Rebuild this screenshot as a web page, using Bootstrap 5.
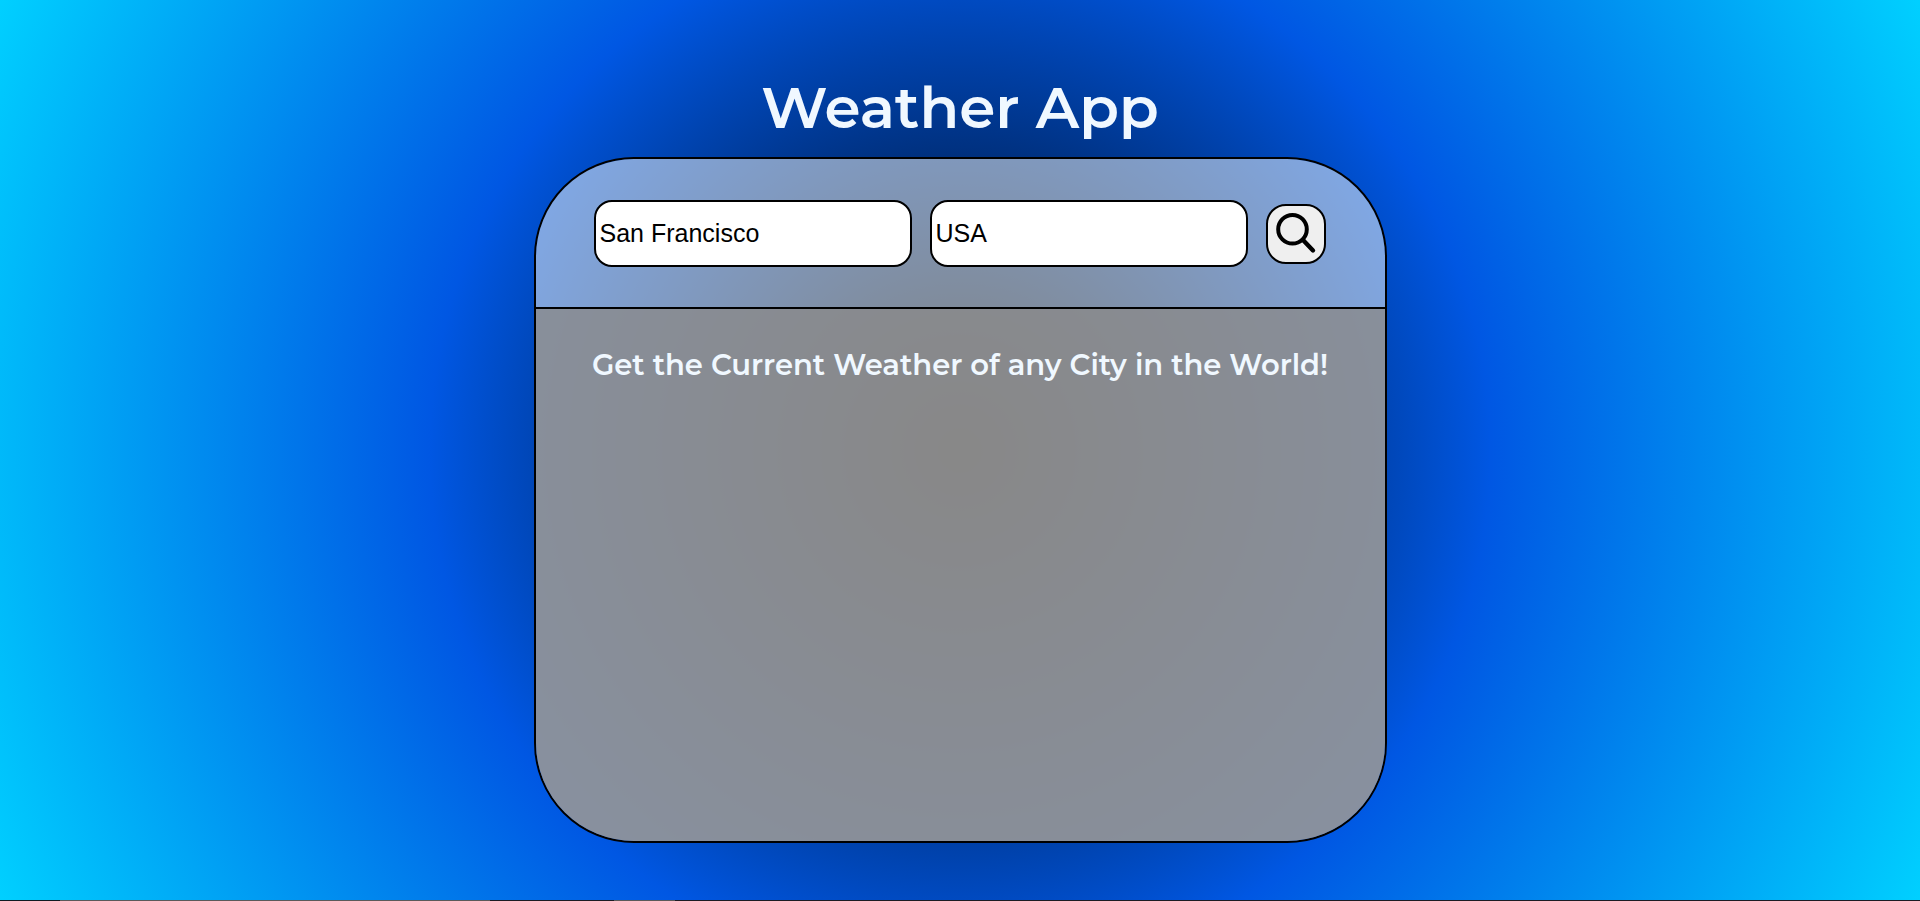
<!DOCTYPE html>
<html lang="en">
<head>
<meta charset="utf-8">
<meta name="viewport" content="width=device-width, initial-scale=1">
<title>Weather App</title>
<link href="https://cdn.jsdelivr.net/npm/bootstrap@5.3.0/dist/css/bootstrap.min.css" rel="stylesheet">
<style>
  body {
    background: radial-gradient(circle, #000 0%, #0057e3 50%, #00d0ff 100%);
    color: aliceblue;
    font-family: Montserrat, Inter, sans-serif;
  }
  .app-main { padding-top: 72px; padding-bottom: 56px; }
  .app-title { font-size: 58px; line-height: 72px; font-weight: 600; margin-bottom: 13px; }
  .weather-panel {
    max-width: 853px;
    border: 2px solid #000;
    border-radius: 100px;
    overflow: hidden;
  }
  .search-bar {
    gap: 18px;
    padding: 41px 59px 40px 58px;
    background: rgba(255, 255, 250, .5);
    border-bottom: 2px solid #000;
  }
  .place-input {
    min-width: 0;
    height: 67px;
    padding: 0 4px;
    border: 2px solid #000;
    border-radius: 18px;
    background: #fff;
    color: #000;
    font: 25px "Liberation Sans", sans-serif;
  }
  .search-btn {
    width: 60px;
    height: 60px;
    border: 2px solid #000;
    border-radius: 20px;
    background: #efefef;
  }
  .result-area {
    min-height: 532px;
    padding: 36px 16px;
    background: rgba(151, 151, 151, .9);
  }
  .result-text { font-size: 29px; line-height: 40px; font-weight: 600; }
  .bottom-edge {
    height: 1px;
    background: linear-gradient(90deg, #101c22 60px, #5a5a5a 60px 490px, #1c1c24 490px 614px, #5a5a5a 614px 675px, #1c1c24 675px);
  }
</style>
</head>
<body class="min-vh-100 d-flex flex-column">
<main class="app-main container-fluid flex-grow-1 d-flex flex-column align-items-center">
  <h1 class="app-title text-center">Weather App</h1>
  <section class="weather-panel w-100">
    <form class="search-bar d-flex align-items-center" onsubmit="return false">
      <input class="place-input flex-fill" type="text" value="San Francisco" aria-label="City">
      <input class="place-input flex-fill" type="text" value="USA" aria-label="Country">
      <button class="search-btn flex-shrink-0 p-0 d-flex align-items-center justify-content-center" type="submit" aria-label="Search">
        <svg width="56" height="56" viewBox="0 0 56 56" fill="none" stroke="#000" stroke-linecap="round">
          <circle cx="24.5" cy="23.2" r="14.3" stroke-width="4"/>
          <path d="M35 34 45 44.5" stroke-width="4.4"/>
        </svg>
      </button>
    </form>
    <div class="result-area text-center">
      <h2 class="result-text mb-0">Get the Current Weather of any City in the World!</h2>
    </div>
  </section>
</main>
<footer class="bottom-edge"></footer>
<script src="https://cdn.jsdelivr.net/npm/bootstrap@5.3.0/dist/js/bootstrap.bundle.min.js"></script>
</body>
</html>
